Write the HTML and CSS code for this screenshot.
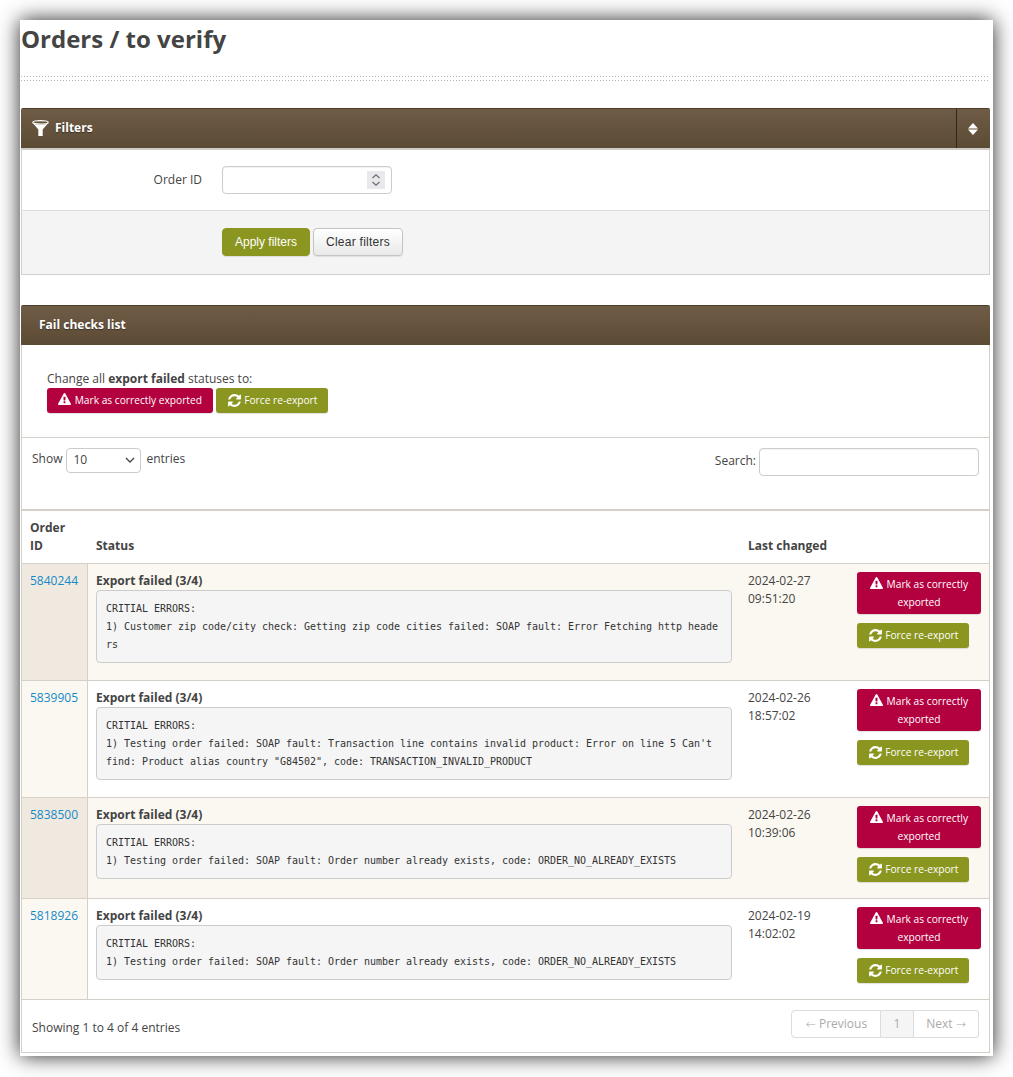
FILE: index.html
```html
<!DOCTYPE html>
<html lang="en">
<head>
<meta charset="utf-8">
<title>Orders / to verify</title>
<link rel="stylesheet" href="styles.css">
</head>
<body>
<svg class="defs" width="0" height="0" aria-hidden="true">
  <symbol id="i-warn" viewBox="0 0 1792 1792"><path d="M1024 1375v-190q0-14-9.5-23.5t-22.5-9.5h-192q-13 0-22.5 9.5t-9.5 23.5v190q0 14 9.5 23.5t22.5 9.5h192q13 0 22.5-9.5t9.5-23.5zm-2-374l18-459q0-12-10-19-13-11-24-11h-220q-11 0-24 11-10 7-10 21l17 457q0 10 10 16.5t24 6.5h185q14 0 23.5-6.5t10.5-16.5zm-14-934l768 1408q35 63-2 126-17 29-46.5 46t-63.5 17h-1536q-34 0-63.5-17t-46.5-46q-37-63-2-126l768-1408q17-31 47-49t65-18 65 18 47 49z"/></symbol>
  <symbol id="i-refresh" viewBox="0 0 1792 1792"><path d="M1639 1056q0 5-1 7-64 268-268 434.5t-478 166.5q-146 0-282.5-55t-243.5-157l-129 129q-19 19-45 19t-45-19-19-45v-448q0-26 19-45t45-19h448q26 0 45 19t19 45-19 45l-137 137q71 66 161 102t187 36q134 0 250-65t186-179q11-17 53-117 8-23 30-23h192q13 0 22.5 9.5t9.5 22.5zm25-800v448q0 26-19 45t-45 19h-448q-26 0-45-19t-19-45 19-45l138-138q-148-137-349-137-134 0-250 65t-186 179q-11 17-53 117-8 23-30 23h-199q-13 0-22.5-9.5t-9.5-22.5v-7q65-268 270-434.5t480-166.5q146 0 284 55.5t245 156.5l130-129q19-19 45-19t45 19 19 45z"/></symbol>
</svg>
<div class="page">
  <h1 class="title">Orders / to verify</h1>
  <div class="rule"></div>

  <section class="panel panel-filters">
    <header class="panel-head">
      <svg class="funnel" viewBox="0 0 17 16" width="17" height="16" aria-hidden="true">
        <ellipse cx="8.500" cy="2.400" rx="7.700" ry="1.700" fill="none" stroke="#fff" stroke-width="1.300"/>
        <path d="M1 3.200C3.300 4.600 6 5 8.500 5s5.200-.4 7.500-1.800L10.700 9.500V16H6.300V9.500Z" fill="#fff"/>
      </svg>
      <span class="panel-title">Filters</span>
      <span class="panel-toggle">
        <svg viewBox="0 0 10 12" width="10" height="12" aria-hidden="true"><path d="M5 0 10 5.400H0ZM5 12 0 6.600h10Z" fill="#fff"/></svg>
      </span>
    </header>
    <div class="filter-row">
      <label class="filter-label" for="order-id">Order ID</label>
      <span class="number-wrap">
        <input class="field field-number" id="order-id" type="number">
        <span class="spin"><svg viewBox="0 0 18 18" width="18" height="18" aria-hidden="true"><path d="M5.500 7 9 3.800 12.500 7M5.500 11 9 14.200 12.500 11" fill="none" stroke="#6d6d6d" stroke-width="1.200"/></svg></span>
      </span>
    </div>
    <div class="filter-actions">
      <button class="btn-apply" type="button">Apply filters</button>
      <button class="btn-clear" type="button">Clear filters</button>
    </div>
  </section>

  <section class="panel panel-list">
    <header class="panel-head panel-head-list">
      <span class="panel-title">Fail checks list</span>
    </header>
    <div class="mass">
      <p class="mass-text">Change all <b>export failed</b> statuses to:</p>
      <div class="mass-buttons">
        <a class="act act-red act-wide"><svg class="ico ico-warn"><use href="#i-warn"/></svg> Mark as correctly exported</a>
        <a class="act act-olive"><svg class="ico ico-refresh"><use href="#i-refresh"/></svg> Force re-export</a>
      </div>
    </div>
    <div class="tools">
      <div class="length">
        <span>Show</span>
        <span class="select"><span>10</span><svg viewBox="0 0 10 6" width="10" height="6" aria-hidden="true"><path d="M1 1l4 4 4-4" fill="none" stroke="#444" stroke-width="1.300"/></svg></span>
        <span>entries</span>
      </div>
      <div class="search">
        <span class="search-label">Search:</span>
        <input class="field field-search" type="text" aria-label="Search">
      </div>
    </div>
    <table class="orders">
      <colgroup><col class="c-id"><col class="c-status"><col class="c-date"><col class="c-act"></colgroup>
      <thead>
        <tr><th>Order<br>ID</th><th>Status</th><th>Last changed</th><th></th></tr>
      </thead>
      <tbody>
        <tr class="odd">
          <td class="id"><a href="#">5840244</a></td>
          <td><b>Export failed (3/4)</b><pre>CRITIAL ERRORS:
1) Customer zip code/city check: Getting zip code cities failed: SOAP fault: Error Fetching http headers</pre></td>
          <td>2024-02-27<br>09:51:20</td>
          <td class="actions"><a class="act act-red"><svg class="ico ico-warn"><use href="#i-warn"/></svg> Mark as correctly exported</a><a class="act act-olive"><svg class="ico ico-refresh"><use href="#i-refresh"/></svg> Force re-export</a></td>
        </tr>
        <tr>
          <td class="id"><a href="#">5839905</a></td>
          <td><b>Export failed (3/4)</b><pre>CRITIAL ERRORS:
1) Testing order failed: SOAP fault: Transaction line contains invalid product: Error on line 5 Can't find: Product alias country "G84502", code: TRANSACTION_INVALID_PRODUCT</pre></td>
          <td>2024-02-26<br>18:57:02</td>
          <td class="actions"><a class="act act-red"><svg class="ico ico-warn"><use href="#i-warn"/></svg> Mark as correctly exported</a><a class="act act-olive"><svg class="ico ico-refresh"><use href="#i-refresh"/></svg> Force re-export</a></td>
        </tr>
        <tr class="odd">
          <td class="id"><a href="#">5838500</a></td>
          <td><b>Export failed (3/4)</b><pre>CRITIAL ERRORS:
1) Testing order failed: SOAP fault: Order number already exists, code: ORDER_NO_ALREADY_EXISTS</pre></td>
          <td>2024-02-26<br>10:39:06</td>
          <td class="actions"><a class="act act-red"><svg class="ico ico-warn"><use href="#i-warn"/></svg> Mark as correctly exported</a><a class="act act-olive"><svg class="ico ico-refresh"><use href="#i-refresh"/></svg> Force re-export</a></td>
        </tr>
        <tr>
          <td class="id"><a href="#">5818926</a></td>
          <td><b>Export failed (3/4)</b><pre>CRITIAL ERRORS:
1) Testing order failed: SOAP fault: Order number already exists, code: ORDER_NO_ALREADY_EXISTS</pre></td>
          <td>2024-02-19<br>14:02:02</td>
          <td class="actions"><a class="act act-red"><svg class="ico ico-warn"><use href="#i-warn"/></svg> Mark as correctly exported</a><a class="act act-olive"><svg class="ico ico-refresh"><use href="#i-refresh"/></svg> Force re-export</a></td>
        </tr>
      </tbody>
    </table>
    <div class="foot">
      <div class="info">Showing 1 to 4 of 4 entries</div>
      <div class="pager">
        <span class="pg pg-prev"><span class="arrow">←</span> Previous</span><span class="pg pg-cur">1</span><span class="pg pg-next">Next <span class="arrow">→</span></span>
      </div>
    </div>
  </section>
</div>
</body>
</html>
```
FILE: styles.css
```css
* { box-sizing: border-box; }
html, body { margin: 0; padding: 0; background: #fff; }
body {
  padding: 20px;
  height: 1077px;
  overflow: hidden;
  font-family: "Open Sans", sans-serif;
  font-size: 12px;
  line-height: 18px;
  color: #444;
}
.defs { position: absolute; }
.page {
  width: 973px;
  height: 1036px;
  padding: 0 3px 0 1px;
  background: #fff;
  box-shadow: 0 0 20px rgba(0, 0, 0, .85);
}
.title {
  margin: 0;
  padding-top: 2px;
  font-size: 24px;
  line-height: 33px;
  font-weight: 700;
  color: #444;
}
.rule {
  margin: 21px 2px 0 0;
  height: 5px;
  background:
    repeating-linear-gradient(to right, #b4b4b4 0 1px, transparent 1px 3px) top / 100% 1px no-repeat,
    repeating-linear-gradient(to right, #b4b4b4 0 1px, transparent 1px 3px) bottom / 100% 1px no-repeat;
}
.panel-filters { margin-top: 27px; }
.panel-list { margin-top: 30px; }
.panel-head {
  display: flex;
  align-items: center;
  height: 42px;
  padding-left: 11px;
  color: #fff;
  background: linear-gradient(#6f5c47, #5b4a34);
  border-top: 1px solid #4c3d2b;
  border-bottom: 2px solid #cfcbc6;
  border-radius: 2px 2px 0 0;
}
.panel-title {
  position: relative;
  top: -1px;
  font-weight: 700;
  font-size: 12px;
  text-shadow: 0 1px 1px rgba(0, 0, 0, .4);
}
.funnel { margin: -2px 6px 0 0; }
.panel-toggle {
  margin-left: auto;
  width: 34px;
  height: 39px;
  padding-right: 2px;
  display: flex;
  align-items: center;
  justify-content: center;
  border-left: 1px solid #2e2619;
}
.panel-head-list {
  height: 40px;
  padding-left: 18px;
  border-bottom: 0;
}
.filter-row {
  display: flex;
  align-items: center;
  height: 61px;
  padding-left: 1px;
  background: #fff;
  border-left: 1px solid #d5cfc9;
  border-right: 1px solid #d5cfc9;
  border-bottom: 1px solid #ddd;
}
.filter-label { width: 179px; text-align: right; margin-right: 20px; }
.field {
  font: 12px "Open Sans", sans-serif;
  background: #fff;
  border: 1px solid #ccc;
  border-radius: 4px;
  box-shadow: inset 0 1px 1px rgba(0, 0, 0, .05);
  outline: 0;
}
.number-wrap { position: relative; display: block; width: 170px; height: 28px; }
.field-number { display: block; width: 170px; height: 28px; padding: 0 26px 0 10px; appearance: textfield; }
.field-number::-webkit-inner-spin-button,
.field-number::-webkit-outer-spin-button { appearance: none; margin: 0; }
.spin {
  position: absolute;
  top: 5px;
  right: 7px;
  width: 18px;
  height: 18px;
  background: #e9e9ed;
  pointer-events: none;
}
.spin svg { display: block; }
.filter-actions {
  display: flex;
  gap: 3px;
  align-items: flex-start;
  height: 64px;
  padding: 17px 0 0 200px;
  background: #f4f4f4;
  border-left: 1px solid #d5cfc9;
  border-right: 1px solid #d5cfc9;
  border-bottom: 1px solid #d5cfc9;
}
.btn-apply, .btn-clear {
  height: 28px;
  padding: 0;
  font: 12px "Liberation Sans", Arial, sans-serif;
  border-radius: 4px;
}
.btn-apply {
  width: 88px;
  color: #fff;
  background: #8b9620;
  border: 1px solid #8b9620;
  box-shadow: 0 1px 1px rgba(0, 0, 0, .1);
}
.btn-clear {
  width: 90px;
  color: #333;
  letter-spacing: .25px;
  background: linear-gradient(#fff, #e9e9e9);
  border: 1px solid #c4c4c4;
  box-shadow: 0 1px 1px rgba(0, 0, 0, .08);
}
.panel-list {
  border-bottom: 1px solid #d5cfc9;
}
.mass {
  height: 93px;
  padding: 25px 25px 0;
  border-left: 1px solid #d5cfc9;
  border-right: 1px solid #d5cfc9;
  border-bottom: 1px solid #d5cfc9;
}
.mass-text { margin: 0; }
.mass-buttons { display: flex; gap: 3px; }
.act {
  display: block;
  font-size: 10.200px;
  line-height: 18px;
  color: #fff;
  text-align: center;
  border-radius: 3px;
  box-shadow: 0 1px 1px rgba(0, 0, 0, .12);
}
.act-red {
  width: 124px;
  padding: 3px 6px;
  background: #b3003f;
}
.act-wide { width: 166px; padding: 3px 0; }
.act-olive {
  width: 112px;
  padding: 3px 0 4px;
  background: #8b9620;
}
.ico {
  display: inline-block;
  fill: #fff;
}
.ico-warn { width: 13px; height: 13px; vertical-align: -2px; margin-right: 1px; }
.ico-refresh { width: 15px; height: 15px; vertical-align: -4px; }
.tools {
  display: flex;
  justify-content: space-between;
  height: 71px;
  padding: 10px 10px 0;
  border-left: 1px solid #d5cfc9;
  border-right: 1px solid #d5cfc9;
}
.length { display: flex; align-items: flex-start; gap: 6px; }
.length > span:first-child, .length > span:last-child { line-height: 22px; }
.length > span:first-child { margin-right: -2px; }
.select {
  display: flex;
  align-items: center;
  justify-content: space-between;
  width: 75px;
  height: 25px;
  padding: 0 5px 1px 6px;
  border: 1px solid #ccc;
  border-radius: 4px;
  margin-right: -1px;
}
.search { display: flex; gap: 3px; align-items: center; height: 28px; }
.search-label { position: relative; top: -1px; }
.field-search { width: 220px; height: 28px; }
.orders {
  width: 100%;
  table-layout: fixed;
  border-collapse: separate;
  border-spacing: 0;
  border-left: 1px solid #d5cfc9;
  border-right: 1px solid #d5cfc9;
}
.c-id { width: 66px; }
.c-status { width: 652px; }
.c-date { width: 109px; }
.orders th {
  padding: 8px;
  text-align: left;
  vertical-align: bottom;
  font-weight: 700;
  border-top: 2px solid #d5cfc9;
}
.orders td {
  padding: 8px;
  vertical-align: top;
  border-top: 1px solid #d5cfc9;
}
.orders tbody tr:last-child td { border-bottom: 1px solid #d5cfc9; }
.orders .odd td { background: #fbf8f1; }
.orders td.id { background: #fbf8f1; border-right: 1px solid #d5cfc9; }
.orders .odd td.id { background: #f0e9df; }
.orders a[href] { color: #1589c9; text-decoration: none; }
.orders pre {
  margin: 0 0 9px;
  padding: 8.500px 9px;
  font-family: "DejaVu Sans Mono", monospace;
  font-size: 10px;
  letter-spacing: -.02px;
  line-height: 18px;
  color: #333;
  white-space: pre-wrap;
  word-break: break-all;
  background: #f5f5f5;
  border: 1px solid #ccc;
  border-radius: 4px;
}
.actions .act-olive { margin: 9px 0 8px; }
.foot {
  display: flex;
  justify-content: space-between;
  height: 52px;
  padding: 10px 10px 0;
  border-left: 1px solid #d5cfc9;
  border-right: 1px solid #d5cfc9;
}
.info { padding-top: 9px; }
.pager { display: flex; height: 28px; color: #aaa; }
.pg {
  display: flex;
  align-items: center;
  justify-content: center;
  gap: 3px;
  border: 1px solid #ddd;
  border-left: 0;
}
.arrow { font-family: "DejaVu Sans", sans-serif; font-weight: 200; }
.pg-prev { width: 90px; padding-left: 1px; border-left: 1px solid #ddd; border-radius: 4px 0 0 4px; }
.pg-cur { width: 33px; background: #f5f5f5; }
.pg-next { width: 65px; border-radius: 0 4px 4px 0; }
```
